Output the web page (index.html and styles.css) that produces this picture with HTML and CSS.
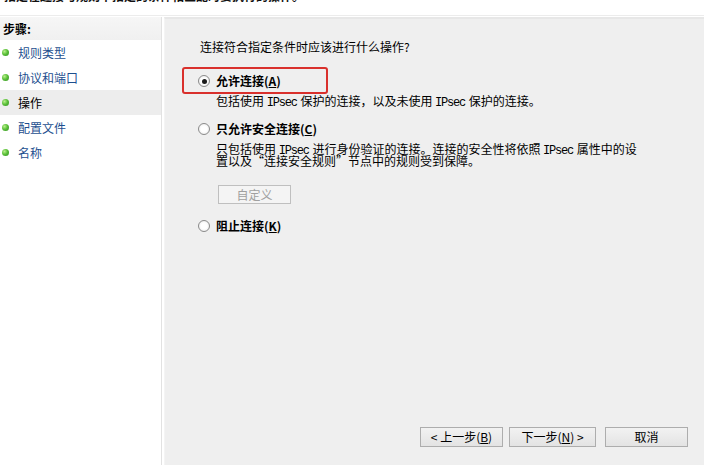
FILE: index.html
```html
<!DOCTYPE html>
<html lang="zh-CN">
<head>
<meta charset="utf-8">
<title>新建入站规则向导</title>
<link rel="stylesheet" href="styles.css">
</head>
<body>
<div class="top">
  <div class="top-text">指定在连接与规则中指定的条件相匹配时要执行的操作。</div>
</div>
<div class="main">
  <aside class="sidebar">
    <div class="side-head">步骤:</div>
    <ul class="steps">
      <li class="step"><span class="dot"></span><span class="link">规则类型</span></li>
      <li class="step"><span class="dot"></span><span class="link">协议和端口</span></li>
      <li class="step current"><span class="dot"></span><span>操作</span></li>
      <li class="step"><span class="dot"></span><span class="link">配置文件</span></li>
      <li class="step"><span class="dot"></span><span class="link">名称</span></li>
    </ul>
  </aside>
  <div class="gap"></div>
  <section class="content">
    <div class="question">连接符合指定条件时应该进行什么操作?</div>

    <div class="option first">
      <span class="radio checked"></span>
      <span class="label">允许连接(<u>A</u>)</span>
      <span class="highlight"></span>
    </div>
    <div class="desc d1"><div class="line">包括使用 <span class="mono">IPsec</span> 保护的连接，以及未使用 <span class="mono">IPsec</span> 保护的连接。</div></div>

    <div class="option second">
      <span class="radio"></span>
      <span class="label">只允许安全连接(<u>C</u>)</span>
    </div>
    <div class="desc d2">
      <div class="line">只包括使用 <span class="mono">IPsec</span> 进行身份验证的连接。连接的安全性将依照 <span class="mono">IPsec</span> 属性中的设</div>
      <div class="line">置以及“连接安全规则”节点中的规则受到保障。</div>
    </div>
    <div class="custom">自定义</div>

    <div class="option third">
      <span class="radio"></span>
      <span class="label">阻止连接(<u>K</u>)</span>
    </div>

    <div class="buttons">
      <div class="btn back">&lt; 上一步(<u>B</u>)</div>
      <div class="btn next">下一步(<u>N</u>) &gt;</div>
      <div class="btn cancel">取消</div>
    </div>
  </section>
</div>
</body>
</html>
```

FILE: styles.css
```css
* { box-sizing: border-box; }
html, body {
  margin: 0;
  padding: 0;
}
body {
  width: 704px;
  height: 465px;
  overflow: hidden;
  background: #ffffff;
  font-family: "Noto Sans CJK SC", "Liberation Sans", sans-serif;
  font-size: 12px;
  line-height: 12px;
  color: #000000;
}
.top {
  height: 16px;
  overflow: hidden;
  border-bottom: 1px solid #ececec;
  background: #ffffff;
}
.top-text {
  margin-top: -10px;
  padding-left: 4px;
  font-weight: bold;
  font-size: 12px;
  line-height: 12px;
  color: #111;
}
.main {
  display: flex;
  height: 449px;
  padding-top: 1px;
}
.sidebar {
  width: 162px;
  background: #ffffff;
  border-right: 1px solid #e2e2e2;
}
.side-head {
  height: 23px;
  padding-left: 3px;
  padding-top: 6px;
  font-weight: bold;
  background: linear-gradient(#f6f6f6, #f0f0f0);
  color: #000;
}
.steps {
  list-style: none;
  margin: 0;
  padding: 0;
}
.step {
  height: 25px;
  display: flex;
  align-items: center;
  padding-left: 2px;
}
.step.current {
  background: #ededed;
}
.dot {
  width: 7px;
  height: 7px;
  border-radius: 50%;
  background: radial-gradient(circle at 35% 35%, #b9ee8c 0%, #5cc13a 45%, #2f8c1f 100%);
  margin-right: 9px;
}
.link {
  color: #1d4f8f;
}
.gap {
  width: 2px;
  background: #ffffff;
}
.content {
  flex: 1;
  background: #efefef;
  border-top: 2px solid #e7e7e7;
  border-left: 1px solid #f4f4f4;
  display: flex;
  flex-direction: column;
  padding-left: 35px;
}
.question {
  margin-top: 22px;
  height: 12px;
}
.option {
  position: relative;
  display: flex;
  align-items: center;
  height: 12px;
  margin-left: -2px;
}
.option.first { margin-top: 22px; }
.option.second { margin-top: 16px; }
.option.third { margin-top: 16px; }
.radio {
  width: 12px;
  height: 12px;
  border-radius: 50%;
  border: 1px solid #8a8a8a;
  background: radial-gradient(circle, #ffffff 40%, #e4e4e4 100%);
  margin-right: 6px;
  display: flex;
  align-items: center;
  justify-content: center;
}
.radio.checked::after {
  content: "";
  width: 5px;
  height: 5px;
  border-radius: 50%;
  background: #1a1a1a;
}
.label {
  font-weight: bold;
}
.highlight {
  position: absolute;
  left: -16px;
  top: -8px;
  width: 146px;
  height: 27px;
  border: 2px solid #d9302c;
  border-radius: 3px;
}
.desc {
  margin-left: 16px;
  margin-top: 8px;
  white-space: nowrap;
}
.line {
  height: 12px;
}
.mono {
  font-family: "Liberation Mono", "DejaVu Sans Mono", monospace;
  font-size: 12px;
  line-height: 12px;
  letter-spacing: -1.2px;
  margin-right: 1px;
}
.custom {
  margin-top: 18px;
  margin-left: 18px;
  width: 73px;
  height: 19px;
  border: 1px solid #bfbfbf;
  background: #f4f4f4;
  color: #a0a0a0;
  display: flex;
  align-items: center;
  justify-content: center;
}
.buttons {
  margin-top: auto;
  margin-bottom: 18px;
  display: flex;
  justify-content: flex-end;
  padding-right: 16px;
}
.btn {
  height: 20px;
  border: 1px solid #adadad;
  background: linear-gradient(#f2f2f2, #e3e3e3);
  display: flex;
  align-items: center;
  justify-content: center;
  color: #000;
}
.back { width: 83px; }
.next { width: 87px; margin-left: 6px; }
.cancel { width: 83px; margin-left: 9px; }
```
